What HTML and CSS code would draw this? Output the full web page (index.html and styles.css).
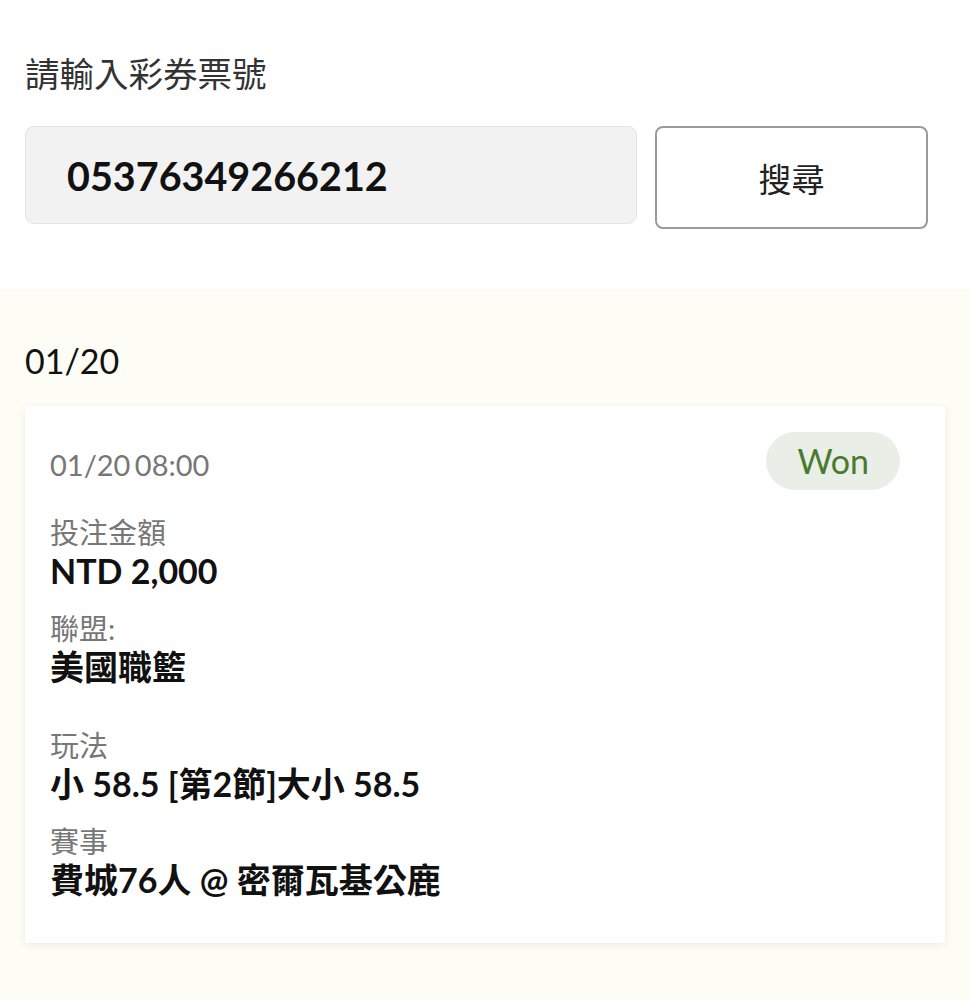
FILE: index.html
```html
<!DOCTYPE html>
<html lang="zh-Hant">
<head>
<meta charset="utf-8">
<link rel="stylesheet" href="styles.css">
</head>
<body>
<div class="search">
  <div class="search-label">請輸入彩券票號</div>
  <div class="search-row">
    <div class="ticket-input">05376349266212</div>
    <button class="search-btn">搜尋</button>
  </div>
</div>
<div class="results">
  <div class="day">01/20</div>
  <div class="card">
    <div class="card-head">
      <div class="time">01/20 08:00</div>
      <div class="badge">Won</div>
    </div>
    <div class="field">
      <div class="label">投注金額</div>
      <div class="value">NTD 2,000</div>
    </div>
    <div class="field">
      <div class="label">聯盟:</div>
      <div class="value">美國職籃</div>
    </div>
    <div class="field field-gap">
      <div class="label">玩法</div>
      <div class="value">小 58.5 [第2節]大小 58.5</div>
    </div>
    <div class="field">
      <div class="label">賽事</div>
      <div class="value">費城76人 @ 密爾瓦基公鹿</div>
    </div>
  </div>
</div>
</body>
</html>
```
FILE: styles.css
```css
html, body {
  margin: 0;
  padding: 0;
  background: #fdfdf5;
  font-family: Lato, "Noto Sans CJK TC", sans-serif;
  color: #111;
}
.search {
  background: #fff;
  padding: 52px 42px 60px 25px;
}
.search-label {
  font-size: 34.5px;
  line-height: 44px;
  color: #333;
  margin-bottom: 30px;
}
.search-row {
  display: flex;
  align-items: flex-start;
  gap: 18px;
}
.ticket-input {
  flex: 0 0 612px;
  box-sizing: border-box;
  height: 98px;
  background: #f2f2f2;
  border: 1px solid #e4e4e4;
  border-radius: 9px;
  padding-left: 41px;
  display: flex;
  align-items: center;
  font-size: 39.5px;
  font-weight: 700;
  color: #111;
}
.search-btn {
  flex: 1;
  height: 103px;
  background: #fff;
  border: 2px solid #9a9a9a;
  border-radius: 8px;
  font-family: Lato, "Noto Sans CJK TC", sans-serif;
  font-size: 33px;
  color: #222;
  padding: 0;
}
.results {
  padding: 50px 25px 56px;
  min-height: 600px;
}
.day {
  font-size: 34px;
  line-height: 44px;
  color: #111;
  margin-bottom: 23px;
}
.card {
  background: #fff;
  border-radius: 3px;
  box-shadow: 0 2px 8px rgba(0, 0, 0, 0.07);
  padding: 26px 45px 43px 25px;
}
.card-head {
  display: flex;
  justify-content: space-between;
  align-items: center;
  margin-bottom: 25px;
}
.time {
  font-size: 29px;
  color: #777;
  padding-top: 6px;
  word-spacing: -3px;
}
.badge {
  background: #e9eee6;
  color: #4a7a30;
  font-size: 34px;
  height: 58px;
  line-height: 58px;
  padding: 0 31px;
  border-radius: 29px;
}
.field {
  margin-bottom: 20px;
}
.field:last-child {
  margin-bottom: 0;
}
.field-gap {
  margin-top: 41px;
}
.label {
  font-size: 29px;
  line-height: 36px;
  color: #777;
}
.value {
  font-size: 34px;
  line-height: 40px;
  font-weight: 700;
  color: #111;
}
```
